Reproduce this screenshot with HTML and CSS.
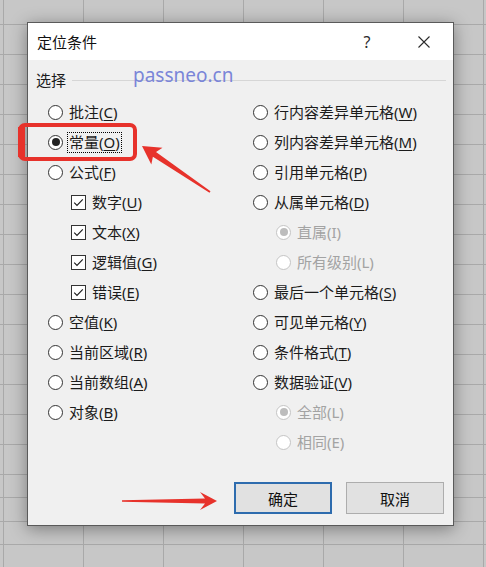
FILE: index.html
```html
<!DOCTYPE html>
<html lang="zh-CN">
<head>
<meta charset="utf-8">
<title>定位条件</title>
<link rel="stylesheet" href="styles.css">
</head>
<body>
<div class="sheet">
  <div class="dialog">
    <div class="titlebar">
      <span class="title">定位条件</span>
      <span class="help">?</span>
      <span class="close"><svg width="12" height="12" viewBox="0 0 12 12"><path d="M0.5 0.5 L11.5 11.5 M11.5 0.5 L0.5 11.5" stroke="#2b2b2b" stroke-width="1.1" fill="none"/></svg></span>
    </div>
    <div class="content">
      <div class="group-head"><span class="group-title">选择</span><span class="rule"></span></div>
      <div class="columns">
        <div class="col col-left">
          <div class="opt"><span class="radio"></span><span class="lbl">批注(<u>C</u>)</span></div>
          <div class="opt"><span class="radio on"></span><span class="lbl focus">常量(<u>O</u>)</span></div>
          <div class="opt"><span class="radio"></span><span class="lbl">公式(<u>F</u>)</span></div>
          <div class="opt sub"><span class="check"><svg width="13" height="13" viewBox="0 0 13 13"><path d="M2.2 6.6 L5 9.4 L10.8 3.4" stroke="#1b1b1b" stroke-width="1.1" fill="none"/></svg></span><span class="lbl">数字(<u>U</u>)</span></div>
          <div class="opt sub"><span class="check"><svg width="13" height="13" viewBox="0 0 13 13"><path d="M2.2 6.6 L5 9.4 L10.8 3.4" stroke="#1b1b1b" stroke-width="1.1" fill="none"/></svg></span><span class="lbl">文本(<u>X</u>)</span></div>
          <div class="opt sub"><span class="check"><svg width="13" height="13" viewBox="0 0 13 13"><path d="M2.2 6.6 L5 9.4 L10.8 3.4" stroke="#1b1b1b" stroke-width="1.1" fill="none"/></svg></span><span class="lbl">逻辑值(<u>G</u>)</span></div>
          <div class="opt sub"><span class="check"><svg width="13" height="13" viewBox="0 0 13 13"><path d="M2.2 6.6 L5 9.4 L10.8 3.4" stroke="#1b1b1b" stroke-width="1.1" fill="none"/></svg></span><span class="lbl">错误(<u>E</u>)</span></div>
          <div class="opt"><span class="radio"></span><span class="lbl">空值(<u>K</u>)</span></div>
          <div class="opt"><span class="radio"></span><span class="lbl">当前区域(<u>R</u>)</span></div>
          <div class="opt"><span class="radio"></span><span class="lbl">当前数组(<u>A</u>)</span></div>
          <div class="opt"><span class="radio"></span><span class="lbl">对象(<u>B</u>)</span></div>
        </div>
        <div class="col col-right">
          <div class="opt"><span class="radio"></span><span class="lbl">行内容差异单元格(<u>W</u>)</span></div>
          <div class="opt"><span class="radio"></span><span class="lbl">列内容差异单元格(<u>M</u>)</span></div>
          <div class="opt"><span class="radio"></span><span class="lbl">引用单元格(<u>P</u>)</span></div>
          <div class="opt"><span class="radio"></span><span class="lbl">从属单元格(<u>D</u>)</span></div>
          <div class="opt sub dis"><span class="radio on"></span><span class="lbl">直属(I)</span></div>
          <div class="opt sub dis"><span class="radio"></span><span class="lbl">所有级别(L)</span></div>
          <div class="opt"><span class="radio"></span><span class="lbl">最后一个单元格(<u>S</u>)</span></div>
          <div class="opt"><span class="radio"></span><span class="lbl">可见单元格(<u>Y</u>)</span></div>
          <div class="opt"><span class="radio"></span><span class="lbl">条件格式(<u>T</u>)</span></div>
          <div class="opt"><span class="radio"></span><span class="lbl">数据验证(<u>V</u>)</span></div>
          <div class="opt sub dis"><span class="radio on"></span><span class="lbl">全部(L)</span></div>
          <div class="opt sub dis"><span class="radio"></span><span class="lbl">相同(E)</span></div>
        </div>
      </div>
      <div class="buttons">
        <button class="btn primary">确定</button>
        <button class="btn">取消</button>
      </div>
    </div>
    <div class="watermark">passneo.cn</div>
  </div>
  <svg class="annot" width="486" height="567" viewBox="0 0 486 567">
    <rect x="20" y="125" width="115" height="34" rx="5" ry="5" fill="none" stroke="#e7322b" stroke-width="4"/>
    <rect x="18" y="127" width="7" height="30" fill="#e7322b"/>
    <polygon points="142,146 162.5,147.8 156,152.1 210.5,191.3 209.5,192.7 152.9,156.7 151.3,164.4" fill="#e7322b"/>
    <polygon points="217,501 200,492 205,498.6 122,500.3 122,501.7 205,503.4 200,510" fill="#e7322b"/>
  </svg>
</div>
</body>
</html>
```

FILE: styles.css
```css
body {
  margin: 0;
  font-family: "Noto Sans", "Noto Sans CJK SC", sans-serif;
  color: #1b1b1b;
}

.sheet {
  position: relative;
  width: 486px;
  height: 567px;
  overflow: hidden;
  box-sizing: border-box;
  padding: 22px 0 0 27px;
  background-color: #c7c7c7;
  background-image:
    linear-gradient(to right, #a9a9a9 1px, transparent 1px),
    linear-gradient(to bottom, #c7c7c7 0 22px, #a9a9a9 22px 23px, #c7c7c7 23px 46px, #a9a9a9 46px 47px, #c7c7c7 47px 69px, #a9a9a9 69px 70px, #c7c7c7 70px),
    linear-gradient(to bottom, #a9a9a9 1px, transparent 1px);
  background-size: 80px 100%, 100% 92px, 100% 30px;
  background-position: 3px 0, 0 475px, 0 24px;
  background-repeat: repeat, no-repeat, repeat;
}

.dialog {
  position: relative;
  width: 427px;
  height: 504px;
  box-sizing: border-box;
  border: 1px solid #5a5a5a;
  box-shadow: 0 3px 16px rgba(0, 0, 0, 0.38);
  display: flex;
  flex-direction: column;
  background: #f0f0f0;
}

.titlebar {
  height: 37px;
  flex: none;
  background: #fff;
  display: flex;
  align-items: center;
  padding: 0 6px 0 9px;
  font-size: 15px;
}

.title {
  flex: 1;
  line-height: 20px;
  color: #111;
}

.help {
  width: 30px;
  text-align: center;
  font-size: 16px;
  color: #2b2b2b;
  line-height: 20px;
}

.close {
  width: 46px;
  margin-left: 19px;
  display: flex;
  justify-content: center;
  align-items: center;
}

.content {
  flex: 1;
  display: flex;
  flex-direction: column;
  padding: 10px 7px 11px 8px;
}

.group-head {
  height: 20px;
  display: flex;
  align-items: center;
  font-size: 15px;
}

.group-title {
  line-height: 20px;
}

.rule {
  flex: 1;
  height: 1px;
  margin-left: 6px;
  background: #d6d6d6;
}

.columns {
  margin-top: 7px;
  margin-left: 12px;
  display: grid;
  grid-template-columns: 205px 1fr;
}

.opt {
  height: 30px;
  display: flex;
  align-items: center;
  font-size: 15px;
}

.opt.sub {
  padding-left: 23px;
}

.lbl {
  margin-left: 6px;
  line-height: 19px;
  white-space: nowrap;
}

.lbl u {
  text-decoration-thickness: 1px;
  text-underline-offset: 2px;
}

.lbl.focus {
  margin-left: 4px;
  padding: 1px 2px;
  outline: 1px dotted #000;
  outline-offset: -1px;
}

.radio {
  width: 15px;
  height: 15px;
  box-sizing: border-box;
  border: 1px solid #333;
  border-radius: 50%;
  background: #fff;
  flex: none;
  display: flex;
  align-items: center;
  justify-content: center;
}

.radio.on::after {
  content: "";
  width: 8px;
  height: 8px;
  border-radius: 50%;
  background: #222;
}

.dis .radio {
  border-color: #c4c4c4;
}

.dis .radio.on::after {
  background: #bdbdbd;
}

.dis .lbl {
  color: #a3a3a3;
}

.check {
  width: 15px;
  height: 15px;
  box-sizing: border-box;
  border: 1px solid #333;
  background: #fff;
  flex: none;
  display: flex;
}

.buttons {
  margin-top: auto;
  display: flex;
  justify-content: flex-end;
  gap: 14px;
  padding-right: 2px;
}

.btn {
  width: 98px;
  height: 32px;
  box-sizing: border-box;
  background: #e1e1e1;
  border: 1px solid #adadad;
  font-family: "Noto Sans", "Noto Sans CJK SC", sans-serif;
  font-size: 15px;
  color: #111;
  padding: 0;
  margin: 0;
}

.btn.primary {
  border: 2px solid #2e6cae;
}

.watermark {
  position: absolute;
  left: 105px;
  top: 43px;
  font-family: "Noto Sans", sans-serif;
  font-size: 19px;
  line-height: 19px;
  color: #7a85d8;
  white-space: nowrap;
}

.annot {
  position: absolute;
  left: 0;
  top: 0;
  pointer-events: none;
}
```
